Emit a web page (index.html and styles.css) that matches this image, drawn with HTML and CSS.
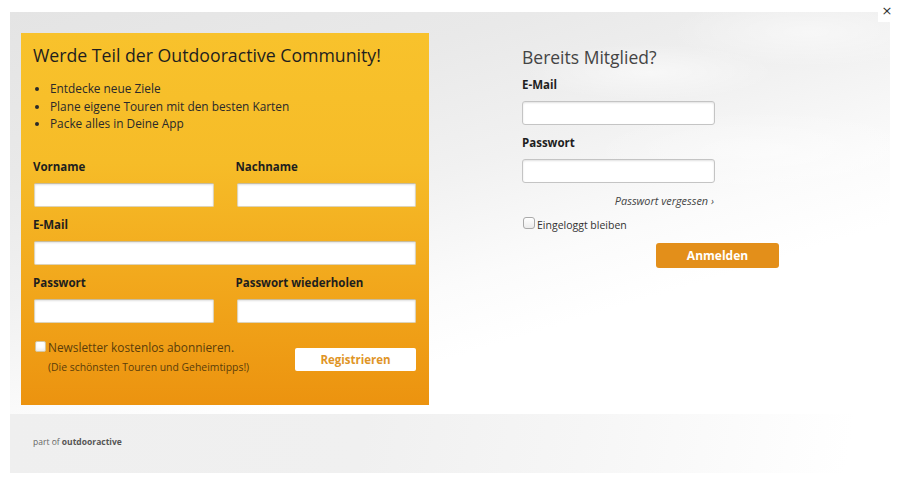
FILE: index.html
```html
<!DOCTYPE html>
<html lang="de">
<head>
<meta charset="utf-8">
<title>Outdooractive Community</title>
<link rel="stylesheet" href="styles.css">
</head>
<body>
<div class="modal">
  <button class="close" type="button">×</button>
  <div class="main">
    <section class="register">
      <h1 class="reg-title">Werde Teil der Outdooractive Community!</h1>
      <ul class="benefits">
        <li>Entdecke neue Ziele</li>
        <li>Plane eigene Touren mit den besten Karten</li>
        <li>Packe alles in Deine App</li>
      </ul>
      <div class="reg-grid">
        <div class="field">
          <label class="lbl">Vorname</label>
          <input class="inp" type="text">
        </div>
        <div class="field">
          <label class="lbl">Nachname</label>
          <input class="inp" type="text">
        </div>
        <div class="field wide">
          <label class="lbl">E-Mail</label>
          <input class="inp" type="text">
        </div>
        <div class="field">
          <label class="lbl">Passwort</label>
          <input class="inp" type="password">
        </div>
        <div class="field">
          <label class="lbl">Passwort wiederholen</label>
          <input class="inp" type="password">
        </div>
      </div>
      <div class="reg-bottom">
        <div class="newsletter">
          <label class="nl-line"><span class="cb cb-yellow"></span>Newsletter kostenlos abonnieren.</label>
          <div class="nl-sub">(Die schönsten Touren und Geheimtipps!)</div>
        </div>
        <button class="btn-reg" type="button">Registrieren</button>
      </div>
    </section>
    <section class="login">
      <h2 class="login-title">Bereits Mitglied?</h2>
      <div class="lfield">
        <label class="lbl">E-Mail</label>
        <input class="linp" type="text">
      </div>
      <div class="lfield">
        <label class="lbl">Passwort</label>
        <input class="linp" type="password">
      </div>
      <div class="forgot"><a href="#">Passwort vergessen ›</a></div>
      <label class="remember"><span class="cb cb-grey"></span>Eingeloggt bleiben</label>
      <div class="login-actions"><button class="btn-login" type="button">Anmelden</button></div>
    </section>
  </div>
  <footer class="footer">part of <b>outdooractive</b></footer>
</div>
</body>
</html>
```
FILE: styles.css
```css
* { box-sizing: border-box; }
html, body { margin: 0; padding: 0; background: #fff; }
body { font-family: "Open Sans", "Noto Sans", sans-serif; color: #222; }

.modal {
  position: relative;
  margin: 12px 10px 0;
  height: 461px;
  background:
    radial-gradient(ellipse 180px 40px at 640px 60px, rgba(255,255,255,0.55), rgba(255,255,255,0) 70%),
    radial-gradient(ellipse 200px 50px at 800px 20px, rgba(255,255,255,0.5), rgba(255,255,255,0) 70%),
    radial-gradient(ellipse 260px 60px at 760px 140px, rgba(255,255,255,0.45), rgba(255,255,255,0) 70%),
    linear-gradient(163deg, #e4e4e4 0%, #e9e9e9 22%, #f1f1f1 40%, #fbfbfb 56%, #ffffff 66%);
  display: flex;
  flex-direction: column;
}

.close {
  position: absolute;
  top: -12px;
  right: -10px;
  width: 22px;
  height: 22px;
  border: 0;
  padding: 0 4px 0 0;
  background: #fff;
  font-family: "DejaVu Sans", sans-serif;
  font-size: 13px;
  line-height: 22px;
  color: #333;
  text-align: center;
}

.main {
  display: flex;
  padding: 21px 0 0 11px;
  height: 393px;
}

.register {
  width: 408px;
  height: 372px;
  padding: 10px 13px 0 12px;
  background: linear-gradient(180deg, #f8c22c 0%, #f6bc28 35%, #f2a91d 65%, #ec930f 100%);
}

.reg-title {
  margin: 0;
  font-size: 17.7px;
  font-weight: 400;
  line-height: 25px;
  color: #1e1e1e;
  white-space: nowrap;
}

.benefits {
  margin: 12px 0 0;
  padding: 0 0 0 17px;
  font-size: 11.85px;
  line-height: 17.5px;
  color: #2a2a2a;
}

.reg-grid {
  margin-top: 25px;
  display: grid;
  grid-template-columns: minmax(0, 1fr) minmax(0, 1fr);
  column-gap: 22px;
  row-gap: 9px;
}
.field { display: flex; flex-direction: column; min-width: 0; }
.field.wide { grid-column: 1 / 3; }

.lbl {
  font-size: 11.5px;
  font-weight: 700;
  line-height: 18px;
  color: #1e1e1e;
}

.inp {
  display: block;
  width: calc(100% - 1px);
  margin: 7px 0 0 1px;
  height: 24px;
  border: 1px solid #ddd3b8;
  border-top-color: #c8bc9c;
  border-radius: 2px;
  background: #fff;
  box-shadow: inset 0 1px 2px rgba(0,0,0,0.12);
  font: inherit;
}

.reg-bottom {
  margin-top: 14px;
  display: flex;
  justify-content: space-between;
  align-items: flex-start;
}

.newsletter { padding-left: 2px; }
.nl-line {
  display: flex;
  align-items: center;
  font-size: 11.85px;
  line-height: 20px;
  color: #5b3d0a;
}
.nl-sub {
  margin: 1px 0 0 13px;
  font-size: 10.4px;
  line-height: 18px;
  color: #5b3d0a;
}

.cb {
  display: inline-block;
  width: 11px;
  height: 11px;
  margin-right: 2px;
  background: #fff;
  border: 1px solid #d4c6a0;
  border-radius: 2px;
  box-shadow: inset 0 -2px 3px rgba(0,0,0,0.08);
}
.cb-grey {
  width: 12px;
  height: 12px;
  border: 1px solid #aaa;
  border-radius: 3px;
  background: linear-gradient(#fff, #ececec);
  box-shadow: none;
}

.btn-reg {
  margin-top: 11px;
  width: 121px;
  height: 23px;
  border: 0;
  border-radius: 2px;
  background: #fff;
  color: #e09527;
  font-family: "Open Sans", sans-serif;
  font-size: 11.5px;
  font-weight: 700;
  padding: 0;
}

.login {
  margin-left: 93px;
  width: 257px;
  padding-top: 12px;
}
.login-title {
  margin: 0;
  font-size: 17.5px;
  font-weight: 400;
  line-height: 24px;
  color: #444;
}
.lfield {
  width: 193px;
  display: flex;
  flex-direction: column;
}
.login-title + .lfield { margin-top: 7px; }
.lfield + .lfield { margin-top: 9px; }
.linp {
  display: block;
  width: 100%;
  margin-top: 7px;
  height: 24px;
  border: 1px solid #c4c4c4;
  border-radius: 3px;
  background: #fff;
  box-shadow: inset 0 1px 2px rgba(0,0,0,0.12);
  font: inherit;
}

.forgot {
  width: 192px;
  margin-top: 9px;
  text-align: right;
  font-size: 10.9px;
  line-height: 18px;
  font-style: italic;
}
.forgot a { color: #444; text-decoration: none; }

.remember {
  margin-top: 7px;
  display: flex;
  align-items: center;
  font-size: 10.5px;
  line-height: 16px;
  color: #333;
}
.remember .cb { margin: -4px 2px 0 1px; }

.login-actions {
  margin-top: 10px;
  padding-left: 134px;
}
.btn-login {
  width: 123px;
  height: 25px;
  border: 0;
  border-radius: 3px;
  background: #e38f1a;
  color: #fff;
  font-family: "Open Sans", sans-serif;
  font-size: 12px;
  font-weight: 700;
  padding: 0;
}

.footer {
  margin-top: 9px;
  height: 59px;
  padding: 21px 0 0 23px;
  font-size: 8.5px;
  line-height: 14px;
  color: #666;
  background: linear-gradient(100deg, #efefef 0%, #f0f0f0 40%, #f6f6f6 65%, #ffffff 95%);
}
.footer b { color: #555; font-weight: 700; }
```
